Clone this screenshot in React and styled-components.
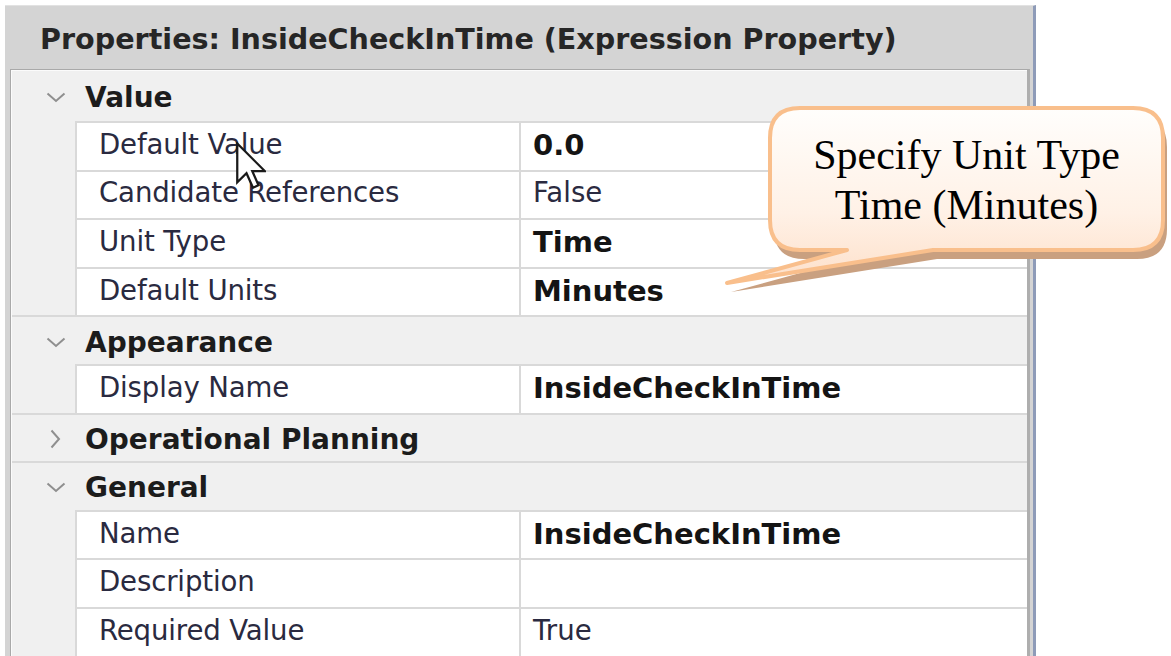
import React from 'react';
import styled, { createGlobalStyle } from 'styled-components';

const GlobalStyle = createGlobalStyle`
  html, body {
    margin: 0;
    padding: 0;
    background: #ffffff;
  }
  body {
    font-family: 'DejaVu Sans', 'Liberation Sans', sans-serif;
  }
`;

const groups = [
  {
    name: 'Value',
    open: true,
    rows: [
      { label: 'Default Value', value: '0.0', bold: true },
      { label: 'Candidate References', value: 'False' },
      { label: 'Unit Type', value: 'Time', bold: true },
      { label: 'Default Units', value: 'Minutes', bold: true },
    ],
  },
  {
    name: 'Appearance',
    open: true,
    rows: [{ label: 'Display Name', value: 'InsideCheckInTime', bold: true }],
  },
  { name: 'Operational Planning', open: false, rows: [] },
  {
    name: 'General',
    open: true,
    rows: [
      { label: 'Name', value: 'InsideCheckInTime', bold: true },
      { label: 'Description', value: '' },
      { label: 'Required Value', value: 'True' },
    ],
  },
];

const Page = styled.div`
  position: relative;
  width: 1171px;
  height: 656px;
  overflow: hidden;
  padding: 5px 0 0 5px;
  box-sizing: border-box;
`;

const Panel = styled.div`
  width: 1028px;
  height: 700px;
  background: #d4d4d4;
  border-right: 3px solid #8e9bb8;
  border-top: 1px solid #e2e2e2;
  display: flex;
  flex-direction: column;
`;

const Header = styled.div`
  height: 62px;
  display: flex;
  align-items: center;
  padding: 3px 0 0 35px;
  box-sizing: border-box;
  font-weight: bold;
  font-size: 28.6px;
  color: #262626;
  white-space: nowrap;
`;

const Grid = styled.div`
  flex: 1;
  margin: 1px 3px 0 5px;
  background: #f0f0f0;
  border-top: 1px solid #a9a9a9;
  border-left: 1px solid #a9a9a9;
  border-right: 3px solid #aeaeae;
  box-shadow: inset 1px 1px 0 #fbfbfb;
  padding: 1px 0 0 1px;
`;

const Category = styled.div`
  height: ${(p) => (p.$first ? '50px' : '48.6px')};
  box-sizing: border-box;
  border-top: ${(p) => (p.$first ? 'none' : '2px solid #d9d9d9')};
  display: flex;
  align-items: center;
  padding-top: 3px;
`;

const Toggle = styled.span`
  width: 73px;
  display: flex;
  justify-content: center;
  padding-left: 14px;
  box-sizing: border-box;
`;

const CategoryName = styled.span`
  font-weight: bold;
  font-size: 28px;
  color: #1c1c1c;
`;

const Row = styled.div`
  height: 48.6px;
  box-sizing: border-box;
  margin-left: 63px;
  border-top: 2px solid #d9d9d9;
  border-left: 2px solid #d9d9d9;
  background: #ffffff;
  display: grid;
  grid-template-columns: 444px 1fr;
`;

const Label = styled.div`
  display: flex;
  align-items: center;
  padding: 0 0 4px 22px;
  font-size: 27.6px;
  letter-spacing: -0.15px;
  color: #2a2a40;
  border-right: 2px solid #d9d9d9;
  white-space: nowrap;
`;

const Value = styled.div`
  display: flex;
  align-items: center;
  padding: 0 0 ${(p) => (p.$bold ? '2px' : '4px')} 12px;
  font-size: ${(p) => (p.$bold ? '29px' : '27.6px')};
  font-weight: ${(p) => (p.$bold ? 'bold' : 'normal')};
  color: ${(p) => (p.$bold ? '#141414' : '#2a2a40')};
  white-space: nowrap;
`;

const Callout = styled.div`
  position: absolute;
  left: 722px;
  top: 104px;
  width: 449px;
  height: 192px;
`;

const CalloutText = styled.div`
  position: absolute;
  left: 46px;
  top: 26px;
  width: 397px;
  text-align: center;
  font-family: 'Liberation Serif', 'Times New Roman', serif;
  font-size: 42px;
  line-height: 50px;
  color: #000;
`;

const Cursor = styled.svg`
  position: absolute;
  left: 236px;
  top: 142px;
`;

const Chevron = ({ open }) =>
  open ? (
    <svg width="20" height="11" viewBox="0 0 20 11">
      <polyline points="1.5,1.5 10,9 18.5,1.5" fill="none" stroke="#8f8f8f" strokeWidth="2" />
    </svg>
  ) : (
    <svg width="11" height="20" viewBox="0 0 11 20">
      <polyline points="1.5,1.5 9,10 1.5,18.5" fill="none" stroke="#8f8f8f" strokeWidth="2" />
    </svg>
  );

const CalloutShape = () => (
  <svg width="449" height="192" viewBox="0 0 449 192">
    <defs>
      <linearGradient id="calloutFill" x1="0" y1="0" x2="0" y2="1">
        <stop offset="0" stopColor="#fffefc" />
        <stop offset="0.6" stopColor="#fff1e6" />
        <stop offset="1" stopColor="#fde0ca" />
      </linearGradient>
    </defs>
    <g transform="translate(4 9)">
      <path
        d="M78 4 H411 Q441 4 441 34 V116 Q441 146 411 146 H211 L5 179 L125 146 H78 Q48 146 48 116 V34 Q48 4 78 4 Z"
        fill="#c9a080"
      />
    </g>
    <path
      d="M78 4 H411 Q441 4 441 34 V116 Q441 146 411 146 H211 L5 179 L125 146 H78 Q48 146 48 116 V34 Q48 4 78 4 Z"
      fill="url(#calloutFill)"
      stroke="#f9bf8c"
      strokeWidth="4"
      strokeLinejoin="round"
    />
  </svg>
);

const App = () => (
  <Page>
    <GlobalStyle />
    <Panel>
      <Header>Properties: InsideCheckInTime (Expression Property)</Header>
      <Grid>
        {groups.map((g, gi) => (
          <React.Fragment key={g.name}>
            <Category $first={gi === 0}>
              <Toggle>
                <Chevron open={g.open} />
              </Toggle>
              <CategoryName>{g.name}</CategoryName>
            </Category>
            {g.rows.map((r) => (
              <Row key={r.label}>
                <Label>{r.label}</Label>
                <Value $bold={r.bold}>{r.value}</Value>
              </Row>
            ))}
          </React.Fragment>
        ))}
      </Grid>
    </Panel>

    <Callout>
      <CalloutShape />
      <CalloutText>
        Specify Unit Type
        <br />
        Time (Minutes)
      </CalloutText>
    </Callout>

    <Cursor width="30" height="48" viewBox="0 0 12 19">
      <path
        d="M0.5 0.5 V16 L4.2 12.4 L6.8 18.2 L9 17.2 L6.5 11.5 H11.5 Z"
        fill="#ffffff"
        stroke="#1a1a1a"
        strokeWidth="0.9"
        strokeLinejoin="miter"
      />
    </Cursor>
  </Page>
);

export default App;
